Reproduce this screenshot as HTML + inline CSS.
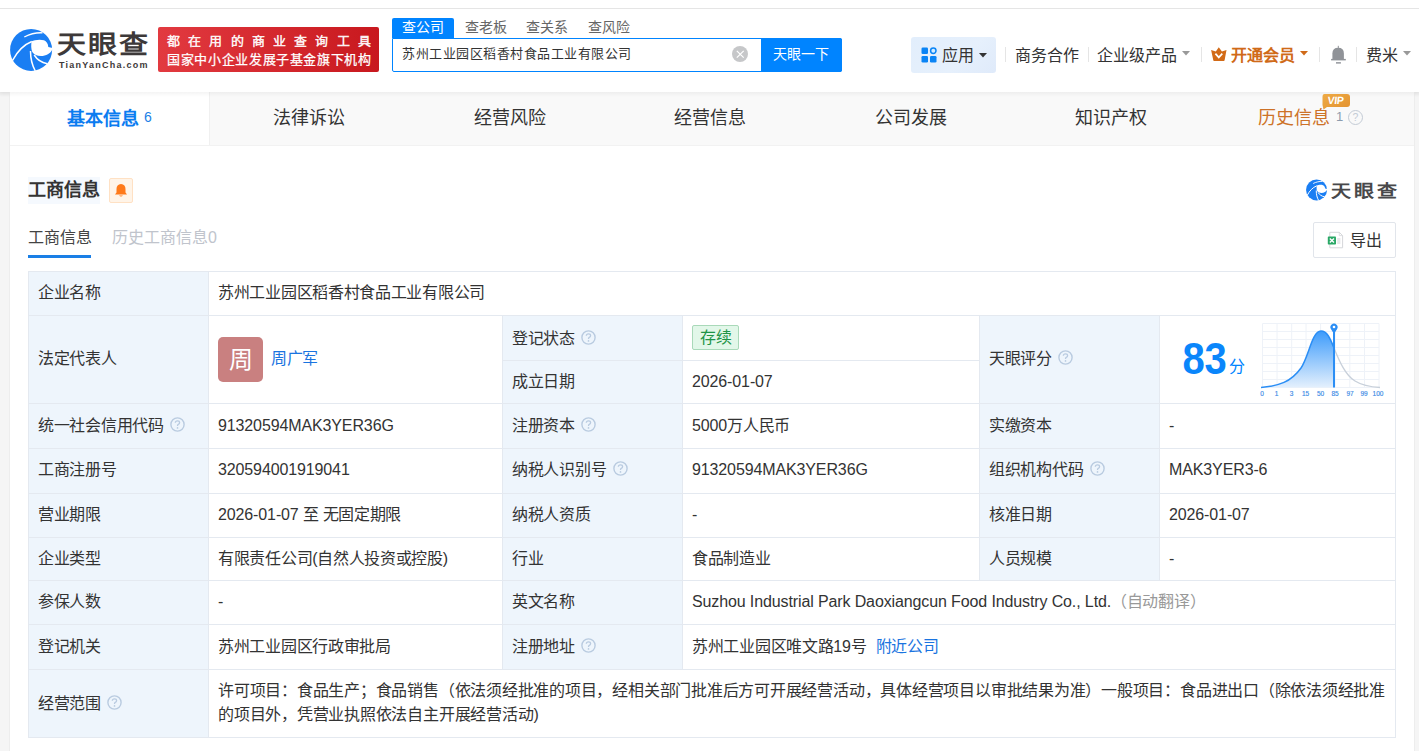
<!DOCTYPE html>
<html lang="zh-CN">
<head>
<meta charset="utf-8">
<style>
*{margin:0;padding:0;box-sizing:border-box}
html,body{width:1419px;height:751px;overflow:hidden;background:#f5f5f5;font-family:"Liberation Sans",sans-serif;color:#333}
.a{position:absolute;white-space:nowrap}
#hdr{position:absolute;left:0;top:0;width:1419px;height:92px;background:#fff;box-shadow:0 2px 4px rgba(0,0,0,.05)}
#topline{position:absolute;left:0;top:8px;width:1419px;height:1px;background:#e5e5e5}
#card{position:absolute;left:10px;top:92px;width:1404px;height:659px;background:#fff}
#tabs{position:absolute;left:10px;top:92px;width:1404px;height:54px;background:#f9f9f9}
#tab1{position:absolute;left:10px;top:92px;width:200px;height:54px;background:#fff;border-right:1px solid #f0f0f0}
.t18{font-size:18px;line-height:24px;color:#333}
.cell{position:absolute;background:#eef5fc}
.hl{position:absolute;height:1px;background:#e4e9f0}
.vl{position:absolute;width:1px;background:#e4e9f0}
.tx{position:absolute;white-space:nowrap;font-size:16px;line-height:20px;color:#333;letter-spacing:-0.3px}
.n{letter-spacing:-0.12px}
.q{display:inline-block;width:15px;height:15px;vertical-align:middle;position:relative;top:-2px;margin-left:6.5px}
</style>
</head>
<body>
<div id="hdr"></div>
<div id="topline"></div>

<!-- logo -->
<svg class="a" style="left:6px;top:24px" width="50" height="52" viewBox="0 0 50 52">
  <circle cx="25.1" cy="25.9" r="21" fill="#1a7ef3"/>
  <path d="M25.6 17.3 C28 16 34 15 38 16.3 C40.5 17.3 42 19.5 42.3 23 L46.5 24 L46.5 25.2 C44.5 29.5 40 32 35 32 C31 32 28 30.5 26.3 28 C25 25 25 21 25.6 17.3Z" fill="#fff"/>
  <path d="M6.5 36.5 C11 28 17 21 25.8 17.5" stroke="#fff" stroke-width="1.5" fill="none"/>
  <path d="M18.3 13 C24 10 31 8.5 36.5 8.8" stroke="#fff" stroke-width="1.3" fill="none"/>
  <path d="M24.5 27 C24.5 35 26 41 29.3 47" stroke="#fff" stroke-width="1.5" fill="none"/>
  <path d="M28.2 31 C31 35.5 35 38.5 41.2 39.7" stroke="#fff" stroke-width="1.5" fill="none"/>
</svg>
<div class="a" style="left:57px;top:24px;font-size:29px;line-height:36px;font-weight:bold;color:#3d3939;letter-spacing:2px;transform:scaleY(0.86);transform-origin:0 100%">天眼查</div>
<div class="a" style="left:59px;top:60px;font-size:9px;line-height:10px;font-weight:bold;color:#3d3939;letter-spacing:1.25px">TianYanCha.com</div>

<!-- red banner -->
<div class="a" style="left:158px;top:27px;width:221px;height:45px;border-radius:2px;background:linear-gradient(90deg,#e23a40,#c8181e)"></div>
<div class="a" style="left:167px;top:33.5px;font-size:13px;line-height:18px;color:rgba(255,255,255,0.95);letter-spacing:8.2px;font-weight:bold;transform:scaleY(0.92);transform-origin:0 0">都在用的商业查询工具</div>
<div class="a" style="left:167px;top:51px;font-size:13px;line-height:18px;color:#fff;letter-spacing:0.65px;-webkit-text-stroke:0.25px #fff">国家中小企业发展子基金旗下机构</div>

<!-- search -->
<div class="a" style="left:392px;top:18px;width:62px;height:20px;background:#0084ff;border-radius:2px 2px 0 0"></div>
<div class="a" style="left:402px;top:17px;font-size:14px;line-height:20px;color:#fff">查公司</div>
<div class="a" style="left:465px;top:17px;font-size:14px;line-height:20px;color:#666">查老板</div>
<div class="a" style="left:526px;top:17px;font-size:14px;line-height:20px;color:#666">查关系</div>
<div class="a" style="left:588px;top:17px;font-size:14px;line-height:20px;color:#666">查风险</div>
<div class="a" style="left:392px;top:38px;width:450px;height:34px;border:1px solid #0084ff;border-radius:0 2px 2px 2px;background:#fff"></div>
<div class="a" style="left:402px;top:44px;font-size:13px;line-height:20px;color:#333;letter-spacing:0.5px">苏州工业园区稻香村食品工业有限公司</div>
<div class="a" style="left:731.5px;top:45.5px;width:16.5px;height:16.5px;border-radius:50%;background:#c6c7c9"></div>
<svg class="a" style="left:731.5px;top:45.5px" width="17" height="17"><path d="M4.8 4.8 L11.7 11.7 M11.7 4.8 L4.8 11.7" stroke="#fff" stroke-width="1.2"/></svg>
<div class="a" style="left:761px;top:38px;width:81px;height:34px;background:#0084ff;border-radius:0 2px 2px 0"></div>
<div class="a" style="left:773px;top:44px;font-size:14px;line-height:20px;color:#fff">天眼一下</div>

<!-- right nav -->
<div class="a" style="left:911px;top:37px;width:85px;height:36px;background:linear-gradient(135deg,#e2eefc,#e6f0fc 60%,#dfeafa);border-radius:3px"></div>
<svg class="a" style="left:921px;top:47px" width="16" height="16" viewBox="0 0 16 16">
  <rect x="0.5" y="0.5" width="6.5" height="6.5" rx="1.3" fill="#0a84f5"/>
  <circle cx="12.3" cy="3.7" r="2.7" fill="#d4ecff" stroke="#0a84f5" stroke-width="1.5"/>
  <rect x="0.5" y="9" width="6.5" height="6.5" rx="1.3" fill="#0a84f5"/>
  <rect x="9" y="9" width="6.5" height="6.5" rx="1.3" fill="#0a84f5"/>
</svg>
<div class="a" style="left:942px;top:46px;font-size:16px;line-height:20px;color:#333">应用</div>
<svg class="a" style="left:979px;top:52.5px" width="8" height="5"><path d="M0 0 L8 0 L4 4.5Z" fill="#333"/></svg>
<div class="a" style="left:1005px;top:47px;width:1px;height:15px;background:#e5e5e5"></div>
<div class="a" style="left:1015px;top:46px;font-size:16px;line-height:20px;color:#333">商务合作</div>
<div class="a" style="left:1088px;top:47px;width:1px;height:15px;background:#e5e5e5"></div>
<div class="a" style="left:1097px;top:46px;font-size:16px;line-height:20px;color:#333">企业级产品</div>
<svg class="a" style="left:1182px;top:51px" width="8" height="5"><path d="M0 0 L8 0 L4 4.5Z" fill="#999"/></svg>
<div class="a" style="left:1201px;top:47px;width:1px;height:15px;background:#e5e5e5"></div>
<svg class="a" style="left:1206px;top:42px" width="26" height="24" viewBox="0 0 26 24">
  <path d="M5.1 8 L9.8 9.6 L12.8 5.2 L15.9 9.6 L20.5 8.1 L18.6 18.3 Q18.4 18.9 17.8 18.9 L8 18.9 Q7.4 18.9 7.3 18.3Z" fill="#d26a17"/>
  <path d="M9.4 11.6 L12.8 15.4 L16.3 11.7" stroke="#fff" stroke-width="1.7" fill="none"/>
</svg>
<div class="a" style="left:1231px;top:46px;font-size:16px;line-height:20px;color:#d06a18;font-weight:bold">开通会员</div>
<svg class="a" style="left:1300px;top:51px" width="8" height="5"><path d="M0 0 L8 0 L4 4.5Z" fill="#d06a18"/></svg>
<div class="a" style="left:1319px;top:47px;width:1px;height:15px;background:#e5e5e5"></div>
<svg class="a" style="left:1326px;top:42px" width="26" height="24" viewBox="0 0 26 24">
  <rect x="11.8" y="3.8" width="1" height="2.4" fill="#909398"/>
  <path d="M6.4 17 L6.4 11.5 Q6.4 5.7 12.2 5.7 Q17.9 5.7 17.9 11.5 L17.9 17Z" fill="#909398"/>
  <rect x="5.1" y="16.9" width="14.7" height="1.5" fill="#909398"/>
  <rect x="10" y="20" width="4.9" height="1.7" fill="#a0a3a8"/>
</svg>
<div class="a" style="left:1356px;top:47px;width:1px;height:15px;background:#e5e5e5"></div>
<div class="a" style="left:1366px;top:46px;font-size:16px;line-height:20px;color:#333">费米</div>
<svg class="a" style="left:1403px;top:51px" width="8" height="5"><path d="M0 0 L8 0 L4 4.5Z" fill="#999"/></svg>

<!-- card -->
<div id="card"></div>
<div class="a" style="left:9px;top:92px;width:1px;height:659px;background:#ededed"></div>
<div class="a" style="left:1414px;top:92px;width:1px;height:659px;background:#ededed"></div>
<div id="tabs"></div>
<div id="tab1"></div>
<div class="a" style="left:10px;top:145px;width:1404px;height:1px;background:#f2f2f2"></div>
<div class="a" style="left:0;top:92px;width:1419px;height:5px;background:linear-gradient(rgba(0,0,0,0.045),rgba(0,0,0,0))"></div>
<div class="a" style="left:67px;top:106.5px;font-size:18px;line-height:24px;color:#0b7cf0;font-weight:bold">基本信息</div>
<div class="a" style="left:144px;top:107px;font-size:14px;line-height:20px;color:#1a7fe6">6</div>
<div class="a t18" style="left:273px;top:105.5px">法律诉讼</div>
<div class="a t18" style="left:474px;top:105.5px">经营风险</div>
<div class="a t18" style="left:674px;top:105.5px">经营信息</div>
<div class="a t18" style="left:875px;top:105.5px">公司发展</div>
<div class="a t18" style="left:1075px;top:105.5px">知识产权</div>
<div class="a t18" style="left:1258px;top:105.5px;color:#cd7228">历史信息</div>
<div class="a" style="left:1336px;top:108px;font-size:13px;line-height:18px;color:#8d9cad">1</div>
<div class="a" style="left:1348px;top:110px;width:15px;height:15px;border:1.5px solid #c3cbd5;border-radius:50%;font-size:10.5px;line-height:12px;text-align:center;color:#c3cbd5">?</div>
<svg class="a" style="left:1321px;top:93px" width="30" height="17" viewBox="0 0 30 17">
  <defs><linearGradient id="vg" x1="0" y1="0" x2="1" y2="1"><stop offset="0" stop-color="#eeaa45"/><stop offset="1" stop-color="#e39230"/></linearGradient></defs>
  <path d="M3.5 1 H26 Q29 1 29 4 V11 Q29 14 26 14 H6 L2.5 16.5 L1.5 12 V4 Q1.5 1 3.5 1Z" fill="url(#vg)"/>
  <text x="15.5" y="11.5" font-size="10.5" font-weight="bold" fill="#fff" text-anchor="middle" font-family="Liberation Sans" transform="skewX(-6)" style="letter-spacing:-0.3px">VIP</text>
</svg>

<!-- section title -->
<div class="a" style="left:28px;top:177px;width:72px;height:27px;background:#f5f9fe"></div>
<div class="a" style="left:28px;top:178px;font-size:18px;line-height:24px;font-weight:bold;color:#333">工商信息</div>
<div class="a" style="left:109px;top:178px;width:24px;height:25px;background:#fff4e8;border:1px solid #ffe1c4;border-radius:2px"></div>
<svg class="a" style="left:114px;top:183px" width="14" height="15" viewBox="0 0 14 15">
  <path d="M7 1 Q11.5 1.5 11.5 6 L11.5 9.5 L13 11.5 L1 11.5 L2.5 9.5 L2.5 6 Q2.5 1.5 7 1Z" fill="#ff7a1a"/>
  <path d="M5 12.5 Q7 14.5 9 12.5Z" fill="#ff7a1a"/>
</svg>
<!-- small logo right -->
<svg class="a" style="left:1303px;top:177px" width="27" height="26" viewBox="0 0 50 52">
  <circle cx="25.1" cy="25.9" r="21" fill="#1a7ef3"/>
  <path d="M25.6 17.3 C28 16 34 15 38 16.3 C40.5 17.3 42 19.5 42.3 23 L46.5 24 L46.5 25.2 C44.5 29.5 40 32 35 32 C31 32 28 30.5 26.3 28 C25 25 25 21 25.6 17.3Z" fill="#fff"/>
  <path d="M6.5 36.5 C11 28 17 21 25.8 17.5" stroke="#fff" stroke-width="2" fill="none"/>
  <path d="M18.3 13 C24 10 31 8.5 36.5 8.8" stroke="#fff" stroke-width="1.8" fill="none"/>
  <path d="M24.5 27 C24.5 35 26 41 29.3 47" stroke="#fff" stroke-width="2" fill="none"/>
  <path d="M28.2 31 C31 35.5 35 38.5 41.2 39.7" stroke="#fff" stroke-width="2" fill="none"/>
</svg>
<div class="a" style="left:1331px;top:176px;font-size:20px;line-height:26px;font-weight:bold;color:#48484a;letter-spacing:2.8px;transform:scaleY(0.84);transform-origin:0 100%">天眼查</div>

<div class="a" style="left:28px;top:228px;font-size:16px;line-height:20px;color:#444">工商信息</div>
<div class="a" style="left:28px;top:255px;width:63px;height:3px;background:#1a7fe6"></div>
<div class="a" style="left:112px;top:228px;font-size:16px;line-height:20px;color:#c0c4cc">历史工商信息0</div>

<div class="a" style="left:1313px;top:222px;width:83px;height:36px;border:1px solid #e1e5eb;border-radius:2px;background:#fff"></div>
<svg class="a" style="left:1327px;top:231px" width="17" height="18" viewBox="0 0 17 18">
  <path d="M2.8 1.3 L12.3 1.3 L15.6 4.6 L15.6 16.8 L2.8 16.8Z" fill="#fff" stroke="#d5d7da" stroke-width="1"/>
  <path d="M12.3 1.3 L12.3 4.6 L15.6 4.6" fill="none" stroke="#d5d7da" stroke-width="0.8"/>
  <rect x="10.2" y="7.5" width="3.2" height="1" fill="#d0d2d5"/><rect x="10.2" y="9.5" width="3.2" height="1" fill="#d0d2d5"/><rect x="10.2" y="11.5" width="3.2" height="1" fill="#d0d2d5"/>
  <rect x="0.8" y="5.6" width="8.2" height="8" rx="0.8" fill="#2aa866"/>
  <path d="M2.8 7.6 L7 11.6 M7 7.6 L2.8 11.6" stroke="#fff" stroke-width="1.4"/>
</svg>
<div class="a" style="left:1350px;top:230.5px;font-size:16px;line-height:20px;color:#333">导出</div>

<!-- TABLE -->
<div class="cell" style="left:28px;top:271px;width:180px;height:466px"></div>
<div class="cell" style="left:502px;top:315px;width:180px;height:265px"></div>
<div class="cell" style="left:502px;top:580px;width:180px;height:89px"></div>
<div class="cell" style="left:979px;top:315px;width:180px;height:265px"></div>

<div class="hl" style="left:28px;top:271px;width:1368px"></div>
<div class="hl" style="left:28px;top:315px;width:1368px"></div>
<div class="hl" style="left:502px;top:360px;width:477px"></div>
<div class="hl" style="left:28px;top:403px;width:1368px"></div>
<div class="hl" style="left:28px;top:448px;width:1368px"></div>
<div class="hl" style="left:28px;top:493px;width:1368px"></div>
<div class="hl" style="left:28px;top:537px;width:1368px"></div>
<div class="hl" style="left:28px;top:580px;width:1368px"></div>
<div class="hl" style="left:28px;top:624px;width:1368px"></div>
<div class="hl" style="left:28px;top:669px;width:1368px"></div>
<div class="hl" style="left:28px;top:737px;width:1368px"></div>

<div class="vl" style="left:28px;top:271px;height:467px"></div>
<div class="vl" style="left:208px;top:271px;height:467px"></div>
<div class="vl" style="left:502px;top:315px;height:354px"></div>
<div class="vl" style="left:682px;top:315px;height:354px"></div>
<div class="vl" style="left:979px;top:315px;height:265px"></div>
<div class="vl" style="left:1159px;top:315px;height:265px"></div>
<div class="vl" style="left:1395px;top:271px;height:467px"></div>

<!-- row 1 -->
<div class="tx" style="left:38px;top:283px">企业名称</div>
<div class="tx" style="left:218px;top:283px">苏州工业园区稻香村食品工业有限公司</div>
<!-- row 2 -->
<div class="tx" style="left:38px;top:349px">法定代表人</div>
<div class="a" style="left:218px;top:337px;width:45px;height:45px;border-radius:5px;background:#c98080;color:#fff;font-size:24px;line-height:45px;text-align:center">周</div>
<div class="tx" style="left:271px;top:349px;color:#1a74e0">周广军</div>
<div class="tx" style="left:512px;top:329px">登记状态<svg class="q" viewBox="0 0 15 15"><circle cx="7.5" cy="7.5" r="6.6" fill="none" stroke="#b9cbe0" stroke-width="1.4"/><path d="M5.3 5.8 Q5.4 3.8 7.5 3.8 Q9.6 3.8 9.6 5.6 Q9.6 6.8 8.3 7.4 Q7.5 7.8 7.5 8.9" fill="none" stroke="#b9cbe0" stroke-width="1.3"/><circle cx="7.5" cy="10.9" r="0.85" fill="#b9cbe0"/></svg></div>
<div class="a" style="left:692px;top:325px;width:47px;height:25px;border:1px solid #a9d9b9;background:#e2f7e9;border-radius:2px;color:#1f9447;font-size:16px;line-height:23px;text-align:center">存续</div>
<div class="tx" style="left:512px;top:372px">成立日期</div>
<div class="tx" style="left:692px;top:372px"><span class="n">2026-01-07</span></div>
<div class="tx" style="left:989px;top:349px">天眼评分<svg class="q" viewBox="0 0 15 15"><circle cx="7.5" cy="7.5" r="6.6" fill="none" stroke="#b9cbe0" stroke-width="1.4"/><path d="M5.3 5.8 Q5.4 3.8 7.5 3.8 Q9.6 3.8 9.6 5.6 Q9.6 6.8 8.3 7.4 Q7.5 7.8 7.5 8.9" fill="none" stroke="#b9cbe0" stroke-width="1.3"/><circle cx="7.5" cy="10.9" r="0.85" fill="#b9cbe0"/></svg></div>
<div class="a" style="left:1182.5px;top:336px;font-size:40px;line-height:48px;font-weight:bold;color:#0a86fb;letter-spacing:-0.3px;transform:scaleY(1.09);transform-origin:0 70%">83</div>
<div class="a" style="left:1229px;top:357px;font-size:16px;line-height:20px;color:#0084ff">分</div>
<svg class="a" style="left:1259px;top:320px" width="126" height="80" viewBox="0 0 126 80">
  <defs><linearGradient id="g" x1="0" y1="0" x2="0" y2="1"><stop offset="0" stop-color="#3d9bfb"/><stop offset="1" stop-color="#e4f0fd"/></linearGradient></defs>
  <g stroke="#eef2f8" stroke-width="1">
    <path d="M3.5 3.5 V67.5 M18 3.5 V67.5 M32.7 3.5 V67.5 M47 3.5 V67.5 M61.6 3.5 V67.5 M76 3.5 V67.5 M90.8 3.5 V67.5 M105.5 3.5 V67.5 M120 3.5 V67.5"/>
    <path d="M3.5 3.5 H120 M3.5 11.5 H120 M3.5 19.5 H120 M3.5 27.5 H120 M3.5 35.5 H120 M3.5 43.5 H120 M3.5 51.5 H120 M3.5 59.5 H120 M3.5 67.5 H120"/>
  </g>
  <path d="M2 67.5 C20 66 32 62 42 48 C50 36 53 11 62 11 C68 11 71 18 75 28 L75 67.5Z" fill="url(#g)"/>
  <path d="M2 67.5 C20 66 32 62 42 48 C50 36 53 11 62 11 C68 11 71 18 75 28" stroke="#2b8ef5" stroke-width="1.5" fill="none"/>
  <path d="M75 28 C80 40 86 55 96 61 C104 66 112 67 121 67.5" stroke="#c8d0da" stroke-width="1.3" fill="none"/>
  <rect x="74" y="10" width="2" height="57.5" fill="#2b8ef5"/>
  <path d="M75 14 L71.9 9 A3.6 3.6 0 1 1 78.1 9Z" fill="#2b8ef5"/>
  <circle cx="75" cy="7" r="1.3" fill="#fff"/>
  <g font-size="6.5" fill="#3a8ae6" font-family="Liberation Sans" text-anchor="middle" stroke="#3a8ae6" stroke-width="0.15">
    <text x="3" y="76">0</text><text x="17.5" y="76">1</text><text x="32.5" y="76">3</text><text x="46.5" y="76">15</text><text x="61.5" y="76">50</text><text x="76" y="76">85</text><text x="91" y="76">97</text><text x="105" y="76">99</text><text x="119" y="76">100</text>
  </g>
</svg>
<!-- row 3 -->
<div class="tx" style="left:38px;top:416px">统一社会信用代码<svg class="q" viewBox="0 0 15 15"><circle cx="7.5" cy="7.5" r="6.6" fill="none" stroke="#b9cbe0" stroke-width="1.4"/><path d="M5.3 5.8 Q5.4 3.8 7.5 3.8 Q9.6 3.8 9.6 5.6 Q9.6 6.8 8.3 7.4 Q7.5 7.8 7.5 8.9" fill="none" stroke="#b9cbe0" stroke-width="1.3"/><circle cx="7.5" cy="10.9" r="0.85" fill="#b9cbe0"/></svg></div>
<div class="tx" style="left:218px;top:416px"><span class="n">91320594MAK3YER36G</span></div>
<div class="tx" style="left:512px;top:416px">注册资本<svg class="q" viewBox="0 0 15 15"><circle cx="7.5" cy="7.5" r="6.6" fill="none" stroke="#b9cbe0" stroke-width="1.4"/><path d="M5.3 5.8 Q5.4 3.8 7.5 3.8 Q9.6 3.8 9.6 5.6 Q9.6 6.8 8.3 7.4 Q7.5 7.8 7.5 8.9" fill="none" stroke="#b9cbe0" stroke-width="1.3"/><circle cx="7.5" cy="10.9" r="0.85" fill="#b9cbe0"/></svg></div>
<div class="tx" style="left:692px;top:416px"><span class="n">5000</span>万人民币</div>
<div class="tx" style="left:989px;top:416px">实缴资本</div>
<div class="tx" style="left:1169px;top:416px"><span class="n">-</span></div>
<!-- row 4 -->
<div class="tx" style="left:38px;top:460px">工商注册号</div>
<div class="tx" style="left:218px;top:460px"><span class="n">320594001919041</span></div>
<div class="tx" style="left:512px;top:460px">纳税人识别号<svg class="q" viewBox="0 0 15 15"><circle cx="7.5" cy="7.5" r="6.6" fill="none" stroke="#b9cbe0" stroke-width="1.4"/><path d="M5.3 5.8 Q5.4 3.8 7.5 3.8 Q9.6 3.8 9.6 5.6 Q9.6 6.8 8.3 7.4 Q7.5 7.8 7.5 8.9" fill="none" stroke="#b9cbe0" stroke-width="1.3"/><circle cx="7.5" cy="10.9" r="0.85" fill="#b9cbe0"/></svg></div>
<div class="tx" style="left:692px;top:460px"><span class="n">91320594MAK3YER36G</span></div>
<div class="tx" style="left:989px;top:460px">组织机构代码<svg class="q" viewBox="0 0 15 15"><circle cx="7.5" cy="7.5" r="6.6" fill="none" stroke="#b9cbe0" stroke-width="1.4"/><path d="M5.3 5.8 Q5.4 3.8 7.5 3.8 Q9.6 3.8 9.6 5.6 Q9.6 6.8 8.3 7.4 Q7.5 7.8 7.5 8.9" fill="none" stroke="#b9cbe0" stroke-width="1.3"/><circle cx="7.5" cy="10.9" r="0.85" fill="#b9cbe0"/></svg></div>
<div class="tx" style="left:1169px;top:460px"><span class="n">MAK3YER3-6</span></div>
<!-- row 5 -->
<div class="tx" style="left:38px;top:505px">营业期限</div>
<div class="tx" style="left:218px;top:505px"><span class="n">2026-01-07</span> 至 无固定期限</div>
<div class="tx" style="left:512px;top:505px">纳税人资质</div>
<div class="tx" style="left:692px;top:505px"><span class="n">-</span></div>
<div class="tx" style="left:989px;top:505px">核准日期</div>
<div class="tx" style="left:1169px;top:505px"><span class="n">2026-01-07</span></div>
<!-- row 6 -->
<div class="tx" style="left:38px;top:549px">企业类型</div>
<div class="tx" style="left:218px;top:549px">有限责任公司(自然人投资或控股)</div>
<div class="tx" style="left:512px;top:549px">行业</div>
<div class="tx" style="left:692px;top:549px">食品制造业</div>
<div class="tx" style="left:989px;top:549px">人员规模</div>
<div class="tx" style="left:1169px;top:549px"><span class="n">-</span></div>
<!-- row 7 -->
<div class="tx" style="left:38px;top:592px">参保人数</div>
<div class="tx" style="left:218px;top:592px"><span class="n">-</span></div>
<div class="tx" style="left:512px;top:592px">英文名称</div>
<div class="tx" style="left:692px;top:592px"><span class="n">Suzhou Industrial Park Daoxiangcun Food Industry Co., Ltd.</span><span style="color:#999">（自动翻译）</span></div>
<!-- row 8 -->
<div class="tx" style="left:38px;top:637px">登记机关</div>
<div class="tx" style="left:218px;top:637px">苏州工业园区行政审批局</div>
<div class="tx" style="left:512px;top:637px">注册地址<svg class="q" viewBox="0 0 15 15"><circle cx="7.5" cy="7.5" r="6.6" fill="none" stroke="#b9cbe0" stroke-width="1.4"/><path d="M5.3 5.8 Q5.4 3.8 7.5 3.8 Q9.6 3.8 9.6 5.6 Q9.6 6.8 8.3 7.4 Q7.5 7.8 7.5 8.9" fill="none" stroke="#b9cbe0" stroke-width="1.3"/><circle cx="7.5" cy="10.9" r="0.85" fill="#b9cbe0"/></svg></div>
<div class="tx" style="left:692px;top:637px">苏州工业园区唯文路<span class="n">19</span>号<span style="color:#1a74e0;margin-left:9px">附近公司</span></div>
<!-- row 9 -->
<div class="tx" style="left:38px;top:694px">经营范围<svg class="q" viewBox="0 0 15 15"><circle cx="7.5" cy="7.5" r="6.6" fill="none" stroke="#b9cbe0" stroke-width="1.4"/><path d="M5.3 5.8 Q5.4 3.8 7.5 3.8 Q9.6 3.8 9.6 5.6 Q9.6 6.8 8.3 7.4 Q7.5 7.8 7.5 8.9" fill="none" stroke="#b9cbe0" stroke-width="1.3"/><circle cx="7.5" cy="10.9" r="0.85" fill="#b9cbe0"/></svg></div>
<div class="tx" style="left:218px;top:679px;line-height:24px;letter-spacing:-0.23px">许可项目：食品生产；食品销售（依法须经批准的项目，经相关部门批准后方可开展经营活动，具体经营项目以审批结果为准）一般项目：食品进出口（除依法须经批准<br>的项目外，凭营业执照依法自主开展经营活动)</div>
</body>
</html>
